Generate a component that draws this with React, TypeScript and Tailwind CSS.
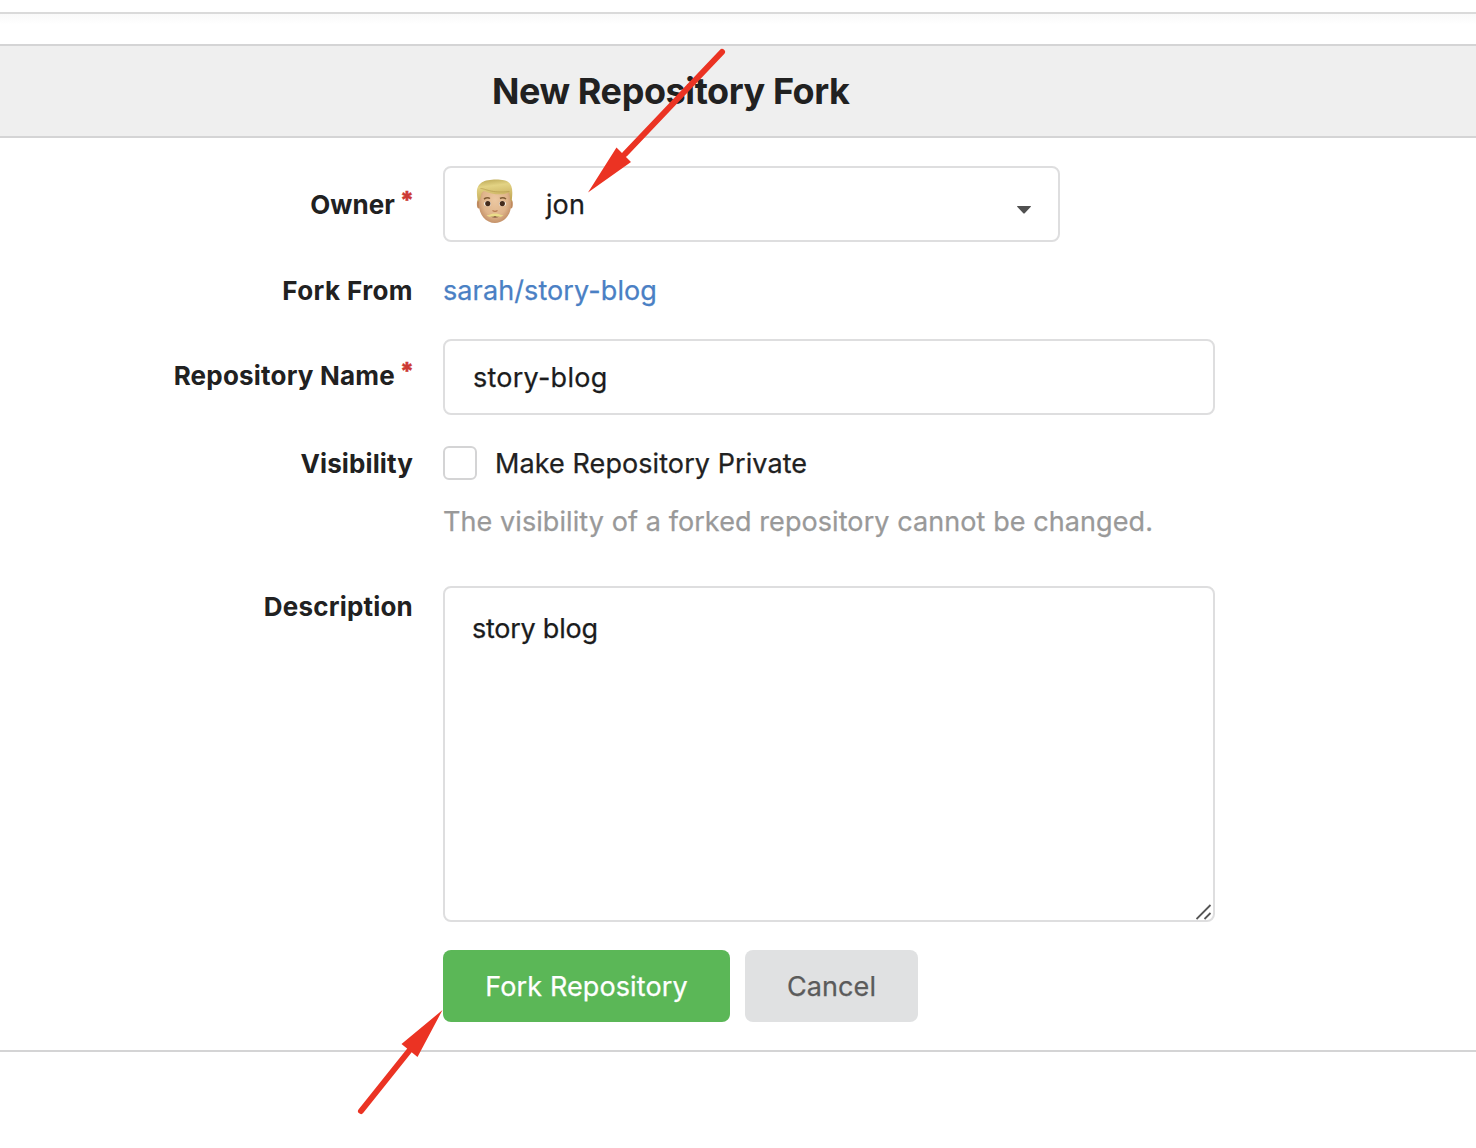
import type { ReactNode } from "react";

function Label({ children, required, className = "" }: { children: ReactNode; required?: boolean; className?: string }) {
  return (
    <label
      className={`flex w-[413px] shrink-0 justify-end whitespace-nowrap text-[26px] leading-[32px] font-bold [-webkit-text-stroke:0px] ${className}`}
    >
      {children}
      {required && (
        <span className="-mt-[4px] ml-[5px] w-[13px] pr-px text-center text-[24px] leading-[32px] font-extrabold tracking-normal text-[#cc3a33] [-webkit-text-stroke:0.4px_#cc3a33]">
          *
        </span>
      )}
    </label>
  );
}

function Avatar() {
  return (
    <svg width="38" height="46" viewBox="0 0 38 46" className="shrink-0">
      <defs>
        <radialGradient id="face" cx="50%" cy="45%" r="60%">
          <stop offset="0" stopColor="#ecc8a2" />
          <stop offset="0.65" stopColor="#dfb48a" />
          <stop offset="1" stopColor="#bd8860" />
        </radialGradient>
        <linearGradient id="hair" x1="0" y1="0" x2="0.2" y2="1">
          <stop offset="0" stopColor="#b9a552" />
          <stop offset="0.35" stopColor="#e3d384" />
          <stop offset="1" stopColor="#c4a957" />
        </linearGradient>
      </defs>
      <ellipse cx="2.900" cy="26" rx="2" ry="4.600" fill="#c08a5e" />
      <ellipse cx="34.800" cy="26" rx="2" ry="4.600" fill="#c08a5e" />
      <path d="M3 14C3 5 9 3 19 3s16 2 16 11v13c0 10-7 18-16 18S3 37 3 27Z" fill="url(#face)" />
      <path
        d="M2 24C-.2 12 .8 8 6 4.300 10.500 1.300 22 .8 28 2.300c8 1.500 9.500 8 7.500 21.700-1.500-1.500-1.300-6-2.500-9.500-7 3-16 2.300-25-1.500-1 1-2 1-2.700 3-.4 3-1 6-3.300 8Z"
        fill="url(#hair)"
      />
      <path d="M4.500 10.500c5 0 10 5 29 3" fill="none" stroke="#a88c40" strokeWidth="1" opacity="0.5" />
      <path d="M8 21q3.500-2.300 6-.5M24 20.500q3-1.800 6 .5" fill="none" stroke="#7e5a33" strokeWidth="1.500" />
      <ellipse cx="11.500" cy="25.800" rx="3.600" ry="2.500" fill="#f6ede2" />
      <ellipse cx="26.500" cy="25.800" rx="3.600" ry="2.500" fill="#f6ede2" />
      <circle cx="11.800" cy="25.600" r="2.600" fill="#442b1b" />
      <circle cx="26.300" cy="25.600" r="2.600" fill="#442b1b" />
      <path d="M16.500 32.500q2.500 1.700 5 0" fill="none" stroke="#b77b50" strokeWidth="1.200" />
      <path d="M14 38q5 3 10 0Z" fill="#5f3020" />
      <path d="M10.500 37.300c3.500 .3 5.500-2.300 8.500-1.600 3-.7 5 1.900 8.500 1.600-2 2-6 1.600-8.500 .9-2.500 .7-6.500 1.100-8.500-.9Z" fill="#eadc8a" />
    </svg>
  );
}

export default function App() {
  return (
    <div className="relative flex h-[1148px] w-[1476px] flex-col overflow-hidden bg-white font-['Inter',sans-serif] text-[#212121]">
      <div className="mt-3 h-[2px] shrink-0 bg-[#dadada]" />
      <div className="h-[30px] shrink-0 bg-linear-to-b from-[#f9f9f9] to-white to-35%" />

      <section className="border-y-2 border-[#d4d4d5]">
        <header className="flex h-[92px] items-center border-b-2 border-[#d4d4d5] bg-[#efefef] pl-[492px]">
          <h1 className="text-[36px] leading-none font-bold tracking-[-0.42px] whitespace-nowrap">New Repository Fork</h1>
        </header>

        <form
          className="flex flex-col pt-7 pb-7 text-[27px] leading-[34px] tracking-[0.08px] [-webkit-text-stroke:0.25px]"
          onSubmit={(e) => e.preventDefault()}
        >
          <div className="flex h-[76px] items-center gap-[30px]">
            <Label required className="mt-[2px]">Owner</Label>
            <button type="button" className="flex h-full w-[617px] items-center rounded-lg border-2 border-[#dededf] pl-[31px] text-left text-[#1b1c1d]">
              <span className="-mt-[6px]"><Avatar /></span>
              <span className="mt-[2px] ml-[32px] flex-1">jon</span>
              <svg width="14" height="8" viewBox="0 0 14 8" className="mt-[11px] mr-[27px]">
                <path d="M0 .5q0-.5 .5-.5h13q.5 0 .5 .5L7.500 7.500h-1Z" fill="#505050" />
              </svg>
            </button>
          </div>

          <div className="mt-8 flex h-[34px] items-center gap-[30px]">
            <Label className="tracking-[0.4px]">Fork From</Label>
            <a href="#" className="tracking-[0.1px] text-[#4a80c4]">sarah/story-blog</a>
          </div>

          <div className="mt-[31px] flex h-[76px] gap-[30px]">
            <Label required className="mt-[21px] tracking-[0.2px]">Repository Name</Label>
            <input
              defaultValue="story-blog"
              className="w-[772px] rounded-lg border-2 border-[#dededf] px-7 pt-[2px] tracking-[0.25px] text-[#1b1c1d] outline-none"
            />
          </div>

          <div className="mt-[31px] flex h-[34px] items-center gap-[30px]">
            <Label className="mt-[2px] tracking-[0.12px]">Visibility</Label>
            <div className="flex items-center gap-[18px]">
              <input type="checkbox" className="size-[34px] appearance-none rounded-md border-2 border-[#d4d4d5] bg-white" />
              <span className="mt-[2px]">Make Repository Private</span>
            </div>
          </div>
          <p className="mt-[25px] ml-[443px] h-[34px] text-[#999]">The visibility of a forked repository cannot be changed.</p>

          <div className="mt-[47px] flex h-[336px] gap-[30px]">
            <Label className="mt-[5px] tracking-[0.2px]">Description</Label>
            <div className="relative">
              <textarea
                defaultValue="story blog"
                className="block h-[336px] w-[772px] resize-none rounded-lg border-2 border-[#dededf] px-[27px] pt-[24px] tracking-[-0.25px] text-[#1b1c1d] outline-none"
              />
              <svg width="16" height="16" viewBox="0 0 16 16" className="absolute right-[3px] bottom-[2px]">
                <path d="M.5 15 14.500 1M8.500 15l6-6" stroke="#555" strokeWidth="1.800" />
              </svg>
            </div>
          </div>

          <div className="mt-7 ml-[443px] flex h-[72px] gap-[15px]">
            <button className="w-[287px] rounded-lg bg-[#5bb757] pt-[2px] tracking-[0.1px] text-white">Fork Repository</button>
            <button type="button" className="w-[173px] rounded-lg bg-[#e0e1e2] pt-[2px] text-[#5b5b5b]">Cancel</button>
          </div>
        </form>
      </section>

      <svg width="1476" height="1148" viewBox="0 0 1476 1148" className="pointer-events-none absolute inset-0">
        <g stroke="#eb3323" strokeWidth="6" strokeLinecap="round">
          <path d="M722 52 625 154" />
          <path d="M361 1111 409 1051" />
        </g>
        <path d="M588 192.500 616.500 147.500 631 162ZM442.500 1010 401.500 1044 417.500 1057Z" fill="#eb3323" />
      </svg>
    </div>
  );
}
